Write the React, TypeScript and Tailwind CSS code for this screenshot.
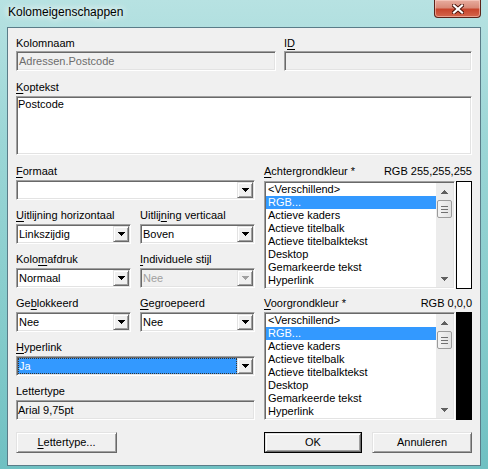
import React from 'react';

const sunken =
  'border border-t-[#a0a0a0] border-l-[#a0a0a0] border-b-white border-r-white p-[1px] shadow-[inset_1px_1px_0_#696969,inset_-1px_-1px_0_#e3e3e3]';
const raised =
  'border border-t-[#e3e3e3] border-l-[#e3e3e3] border-b-[#696969] border-r-[#696969] shadow-[inset_1px_1px_0_#fff,inset_-1px_-1px_0_#a0a0a0]';

const colorItems = [
  '<Verschillend>',
  'RGB...',
  'Actieve kaders',
  'Actieve titelbalk',
  'Actieve titelbalktekst',
  'Desktop',
  'Gemarkeerde tekst',
  'Hyperlink',
];

function Label({ text, u, className = '' }: { text: string; u?: number; className?: string }) {
  // u = index of the access-key letter
  if (u === undefined) return <div className={`leading-[13px] ${className}`}>{text}</div>;
  return (
    <div className={`leading-[13px] whitespace-nowrap ${className}`}>
      {text.slice(0, u)}
      <span className="underline underline-offset-[2px]">{text[u]}</span>
      {text.slice(u + 1)}
    </div>
  );
}

function Tri({ color, up }: { color: string; up?: boolean }) {
  return (
    <svg width="7" height="4" viewBox="0 0 7 4" shapeRendering="crispEdges" className={up ? 'rotate-180' : ''}>
      <path d="M0 0h7v1h-1v1h-1v1h-1v1h-1v-1h-1v-1h-1v-1h-1z" fill={color} />
    </svg>
  );
}

function Select({
  value,
  disabled,
  focused,
}: {
  value: string;
  disabled?: boolean;
  focused?: boolean;
}) {
  return (
    <div className={`h-[20px] flex ${disabled ? 'bg-[#f0f0f0]' : 'bg-white'} ${sunken}`}>
      <div className="flex-1 flex">
        <div
          className={`flex-1 pl-[1px] leading-[16px] ${
            focused
              ? 'bg-[#3399ff] text-white outline-1 outline-dotted outline-[#333] -outline-offset-1'
              : disabled
              ? 'text-[#a0a0a0]'
              : ''
          }`}
        >
          {value}
        </div>
      </div>
      <div className={`w-[16px] h-[16px] flex items-center justify-center bg-[#f0f0f0] ${raised}`}>
        <Tri color={disabled ? '#a0a0a0' : '#000'} />
      </div>
    </div>
  );
}

function ListBox() {
  return (
    <div className={`w-[191px] h-[108px] flex bg-white ${sunken}`}>
      <div className="flex-1 text-[11px]">
        {colorItems.map((it, i) => (
          <div
            key={it}
            className={`h-[13px] leading-[13px] pl-[2px] whitespace-nowrap ${i === 1 ? 'bg-[#3399ff] text-white' : ''}`}
          >
            {it}
          </div>
        ))}
      </div>
      <div className="w-[17px] bg-[#ececec] flex flex-col items-center">
        <div className="h-[17px] flex items-center justify-center">
          <Tri color="#606060" up />
        </div>
        <div className="w-[15px] h-[18px] rounded-[2px] border border-[#9b9b9b] bg-[linear-gradient(90deg,#f4f4f4,#e2e2e2)] flex flex-col items-center justify-center gap-[2px]">
          <div className="w-[7px] h-[1px] bg-[#707070]" />
          <div className="w-[7px] h-[1px] bg-[#707070]" />
          <div className="w-[7px] h-[1px] bg-[#707070]" />
        </div>
        <div className="flex-1" />
        <div className="h-[17px] flex items-center justify-center">
          <Tri color="#606060" />
        </div>
      </div>
    </div>
  );
}

function Button({ children, def, className = '' }: { children: React.ReactNode; def?: boolean; className?: string }) {
  return (
    <div className={`h-[21px] ${def ? 'border border-black' : ''} ${className}`}>
      <div className={`h-full flex items-center justify-center bg-[#f0f0f0] ${raised}`}>{children}</div>
    </div>
  );
}

function Field({ label, u, value, disabled, focused }: { label: string; u?: number; value: string; disabled?: boolean; focused?: boolean }) {
  return (
    <div className="flex-1 min-w-0">
      <Label text={label} u={u} />
      <div className="mt-[2px]">
        <Select value={value} disabled={disabled} focused={focused} />
      </div>
    </div>
  );
}

function CloseX() {
  return (
    <svg width="12" height="10" viewBox="0 0 12 10">
      <path d="M2 1.5L10 8.5M10 1.5L2 8.5" stroke="#4a1208" strokeWidth="4" strokeLinecap="square" />
      <path d="M2 1.5L10 8.5M10 1.5L2 8.5" stroke="#fff" strokeWidth="2.2" strokeLinecap="square" />
    </svg>
  );
}

export default function App() {
  return (
    <div className="w-[488px] h-[469px] overflow-hidden font-['Liberation_Sans',Arial,sans-serif] text-[11px] text-black bg-[linear-gradient(180deg,#b7e2e2_0%,#9bd6d6_30%,#84cbcb_70%,#6fc0c2_100%)]">
      {/* title bar */}
      <div className="h-[27px] flex justify-between items-start">
        <div className="pl-[8px] pt-[5px] text-[12px] leading-[15px] [text-shadow:0_0_6px_#fff,0_0_10px_#fff]">
          Kolomeigenschappen
        </div>
        <div className="mr-[7px] w-[47px] h-[18px] rounded-b-[4px] border border-t-0 border-[#5b2218] bg-[linear-gradient(180deg,#e8ad9f_0%,#d98a78_45%,#c8452c_55%,#d4664c_100%)] shadow-[inset_0_0_0_1px_rgba(255,220,210,0.5)] flex items-center justify-center">
          <CloseX />
        </div>
      </div>

      {/* client area */}
      <div className="mx-[7px] h-[439px] border border-[#5a7c88] bg-[#f0f0f0] pt-[9px] px-[8px]">
        <div className="flex gap-[8px]">
          <div className="w-[260px]">
            <Label text="Kolomnaam" />
            <div className={`mt-[1px] h-[20px] bg-[#f0f0f0] ${sunken} pl-[2px] leading-[16px] text-[#6d6d6d]`}>
              Adressen.Postcode
            </div>
          </div>
          <div className="w-[188px]">
            <Label text="ID" u={1} />
            <div className={`mt-[1px] h-[20px] bg-[#f0f0f0] ${sunken}`} />
          </div>
        </div>

        <Label text="Koptekst" u={0} className="mt-[10px]" />
        <div className={`mt-[2px] h-[59px] bg-white ${sunken} pl-[1px] leading-[13px]`}>Postcode</div>

        <div className="mt-[10px] flex gap-[9px]">
          {/* left column */}
          <div className="w-[239px] flex flex-col gap-[9px]">
            <Field label="Formaat" u={0} value="" />
            <div className="flex gap-[9px]">
              <div className="w-[115px]">
                <Field label="Uitlijning horizontaal" u={0} value="Linkszijdig" />
              </div>
              <div className="w-[115px]">
                <Field label="Uitlijning verticaal" u={6} value="Boven" />
              </div>
            </div>
            <div className="flex gap-[9px]">
              <div className="w-[115px]">
                <Field label="Kolomafdruk" u={4} value="Normaal" />
              </div>
              <div className="w-[115px]">
                <Field label="Individuele stijl" u={0} value="Nee" disabled />
              </div>
            </div>
            <div className="flex gap-[9px]">
              <div className="w-[115px]">
                <Field label="Geblokkeerd" u={2} value="Nee" />
              </div>
              <div className="w-[115px]">
                <Field label="Gegroepeerd" u={0} value="Nee" />
              </div>
            </div>
            <Field label="Hyperlink" u={0} value="Ja" focused />
            <div>
              <Label text="Lettertype" />
              <div className={`mt-[2px] h-[20px] bg-[#f0f0f0] ${sunken} pl-[1px] leading-[16px]`}>Arial 9,75pt</div>
            </div>
            <Button className="mt-[3px] w-[101px]">
              <span>
                <span className="underline underline-offset-[2px]">L</span>ettertype...
              </span>
            </Button>
          </div>

          {/* right column */}
          <div className="w-[208px] flex flex-col">
            <div className="flex justify-between">
              <Label text="Achtergrondkleur *" u={0} />
              <div className="leading-[13px]">RGB 255,255,255</div>
            </div>
            <div className="mt-[3px] flex gap-[1px]">
              <ListBox />
              <div className="w-[16px] border border-black bg-white" />
            </div>
            <div className="mt-[8px] flex justify-between">
              <Label text="Voorgrondkleur *" u={0} />
              <div className="leading-[13px]">RGB 0,0,0</div>
            </div>
            <div className="mt-[2px] flex gap-[1px]">
              <ListBox />
              <div className="w-[16px] bg-black" />
            </div>
            <div className="mt-[12px] flex justify-between">
              <Button def className="w-[98px]">OK</Button>
              <Button className="w-[100px]">Annuleren</Button>
            </div>
          </div>
        </div>
      </div>
    </div>
  );
}
